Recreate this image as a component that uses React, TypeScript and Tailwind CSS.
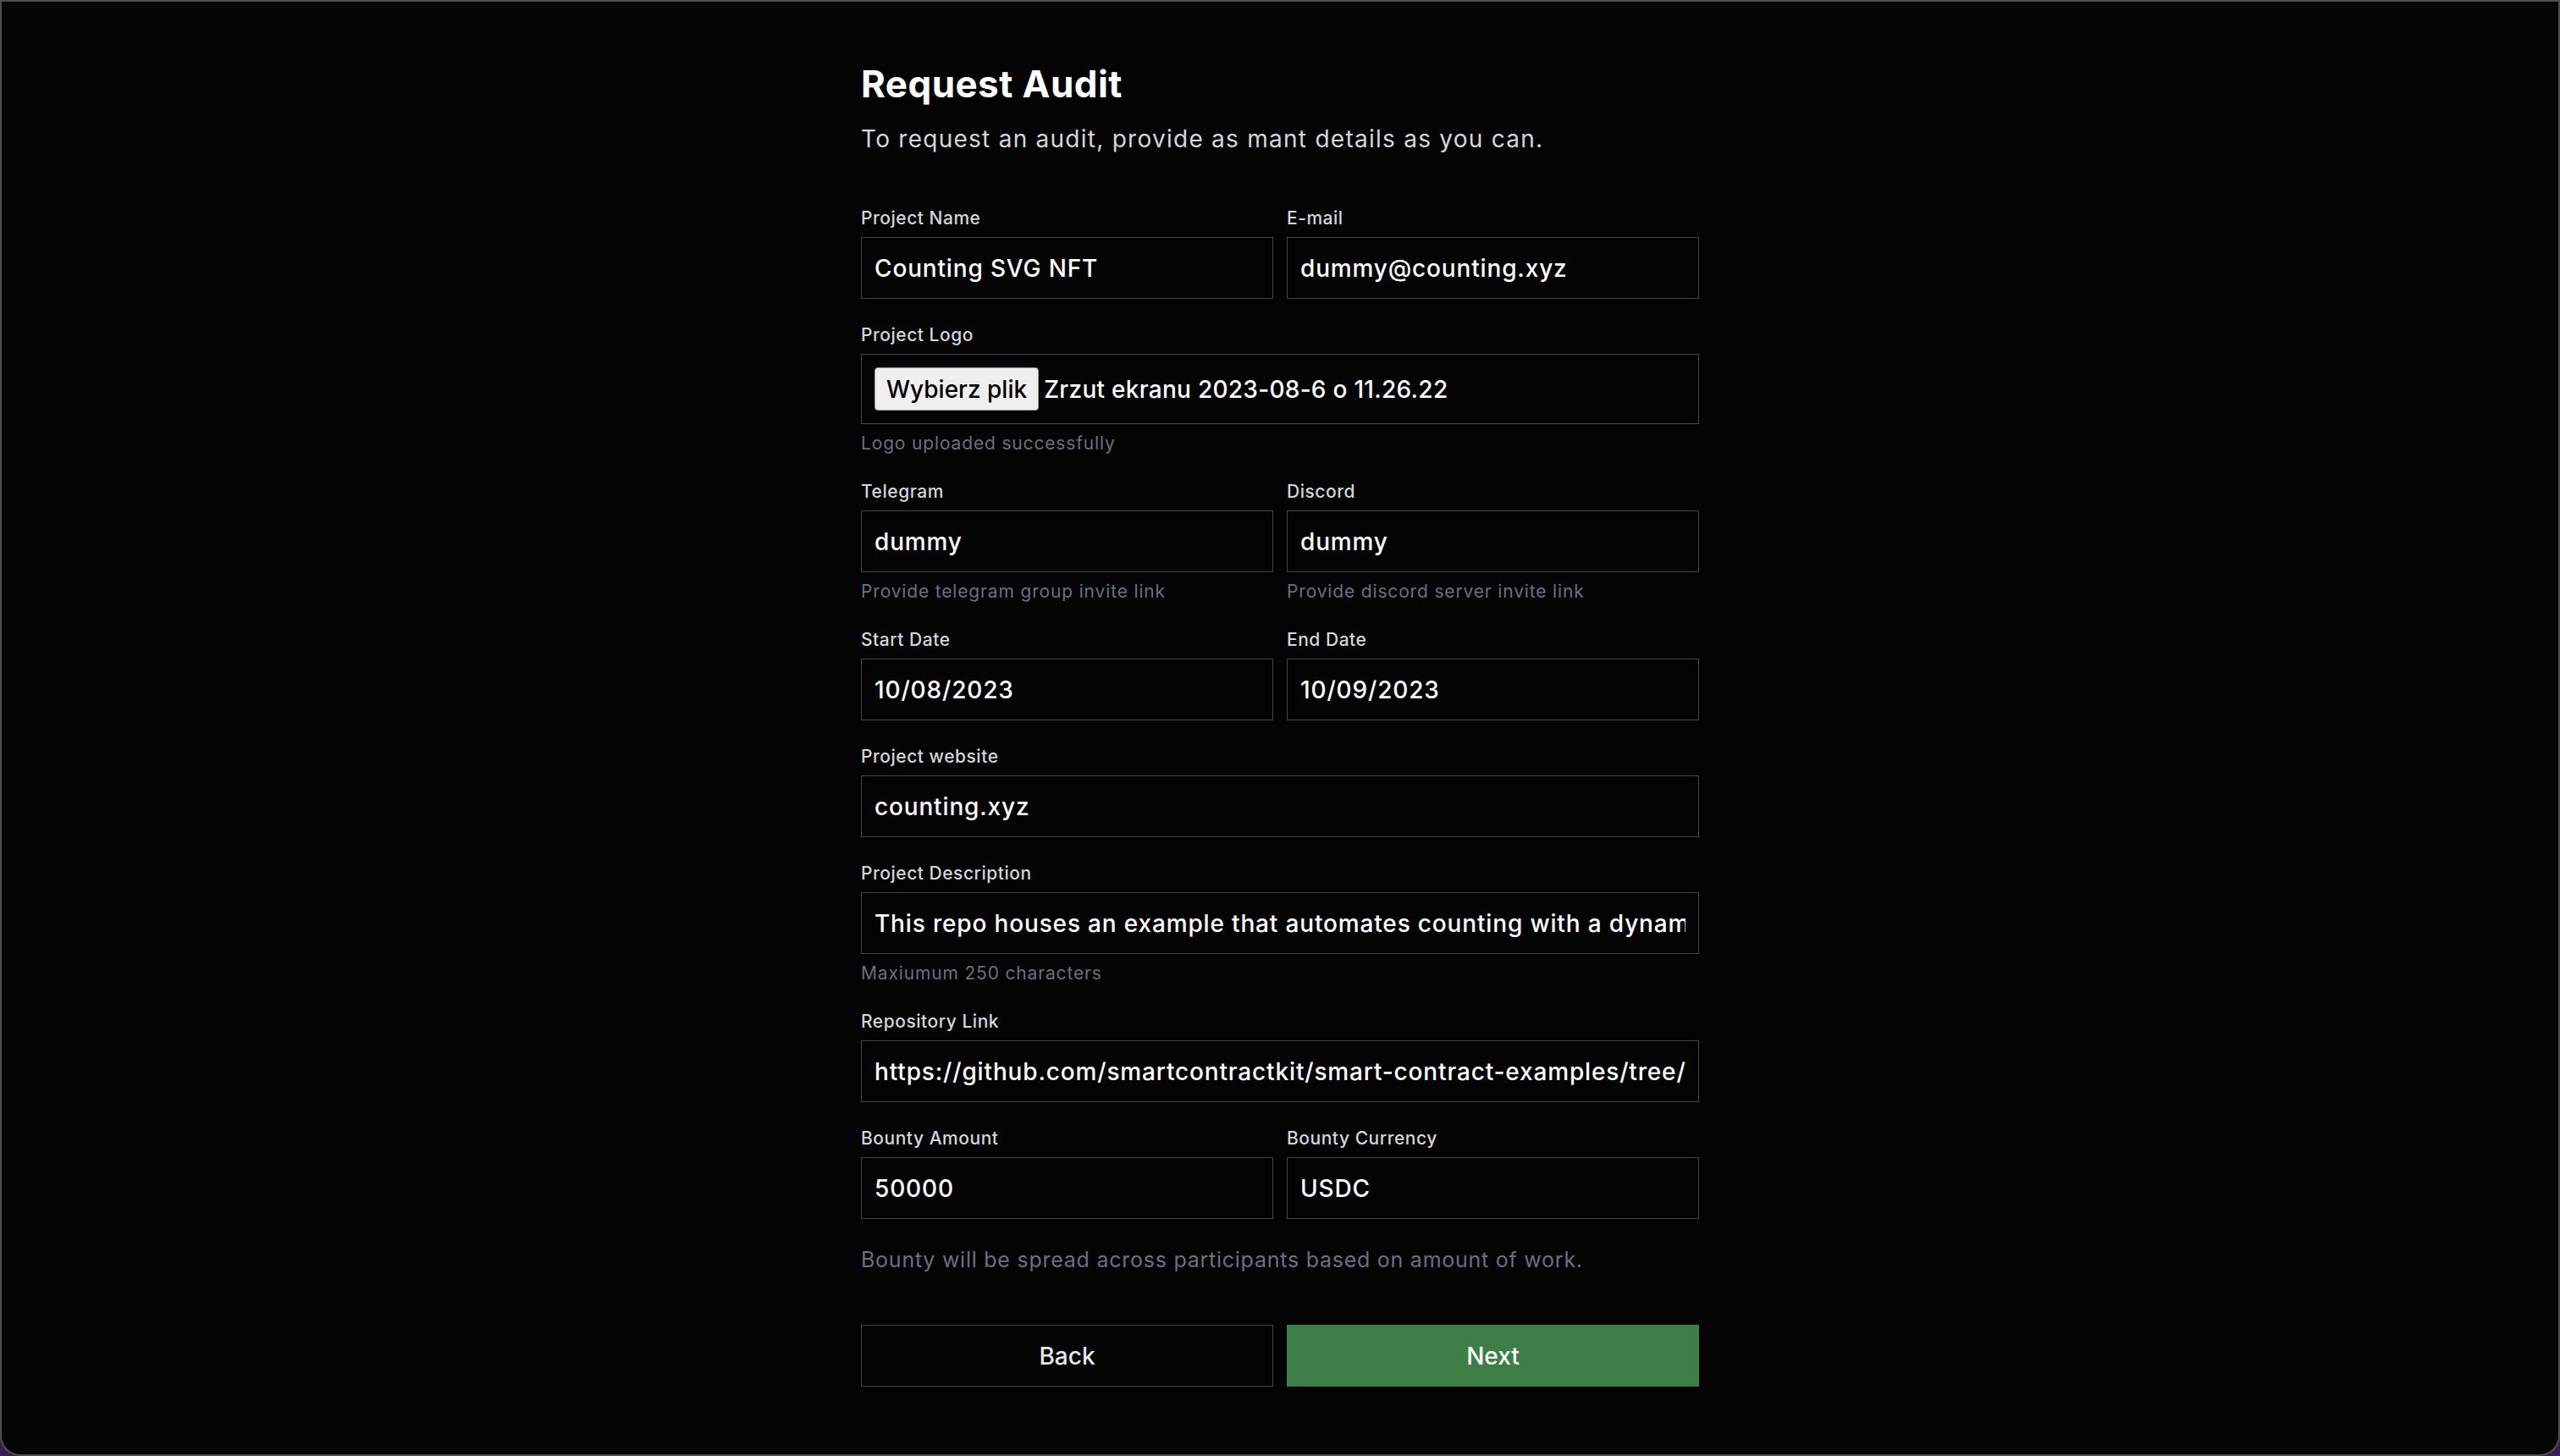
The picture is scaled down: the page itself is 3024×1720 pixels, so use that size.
import React from "react";

type FieldProps = {
  label: string;
  value: string;
  helper?: string;
};

// one labelled input, helper text below when given
function Field({ label, value, helper }: FieldProps) {
  return (
    <div className="flex flex-col min-w-0">
      <label className="text-[21px] leading-[30px] tracking-[0.025em] text-[#d4d6db] font-medium">{label}</label>
      <input
        readOnly
        value={value}
        className="mt-[7px] h-[73px] w-full border border-[#40444f] bg-transparent px-[15px] text-[28px] tracking-[0.03em] font-medium text-white outline-none"
      />
      {helper && <p className="mt-[9px] text-[21px] leading-[28px] tracking-[0.04em] text-[#6b7080]">{helper}</p>}
    </div>
  );
}

export default function App() {
  return (
    <div className="h-[1720px] w-full bg-[#35204f]" style={{ fontFamily: "Inter, 'Noto Sans', sans-serif" }}>
      <div className="h-full rounded-b-[24px] border-2 border-[#4f4f4f] bg-[#040404] flex justify-center">
        <form className="w-[990px] pt-[71px] flex flex-col" onSubmit={(e) => e.preventDefault()}>
          <h1 className="text-[44px] leading-[52px] tracking-[0.01em] font-bold text-white">Request Audit</h1>
          <p className="mt-[21px] text-[28px] leading-[36px] tracking-[0.045em] text-[#d4d6db]">
            To request an audit, provide as mant details as you can.
          </p>

          <div className="mt-[61px] flex flex-col gap-[28px]">
            <div className="grid grid-cols-2 gap-4">
              <Field label="Project Name" value="Counting SVG NFT" />
              <Field label="E-mail" value="dummy@counting.xyz" />
            </div>

            {/* upload */}
            <div className="flex flex-col">
              <label className="text-[21px] leading-[30px] tracking-[0.025em] text-[#d4d6db] font-medium">Project Logo</label>
              <div className="mt-[7px] h-[83px] border border-[#40444f] flex items-center px-[15px] gap-[6px]">
                <span className="h-[51px] px-[13px] flex items-center rounded-[4px] border border-[#9a9a9a] bg-[#efefef] text-[28px] font-medium text-black">
                  Wybierz plik
                </span>
                <span className="text-[28px] tracking-[0.01em] font-medium text-white">Zrzut ekranu 2023-08-6 o 11.26.22</span>
              </div>
              <p className="mt-[9px] text-[21px] leading-[28px] tracking-[0.04em] text-[#6b7080]">Logo uploaded successfully</p>
            </div>

            <div className="grid grid-cols-2 gap-4">
              <Field label="Telegram" value="dummy" helper="Provide telegram group invite link" />
              <Field label="Discord" value="dummy" helper="Provide discord server invite link" />
            </div>

            <div className="grid grid-cols-2 gap-4">
              <Field label="Start Date" value="10/08/2023" />
              <Field label="End Date" value="10/09/2023" />
            </div>

            <Field label="Project website" value="counting.xyz" />

            <Field
              label="Project Description"
              value="This repo houses an example that automates counting with a dynamic SVG NFT"
              helper="Maxiumum 250 characters"
            />

            <Field
              label="Repository Link"
              value="https://github.com/smartcontractkit/smart-contract-examples/tree/main/counting-svg"
            />

            <div className="grid grid-cols-2 gap-4">
              <Field label="Bounty Amount" value="50000" />
              <Field label="Bounty Currency" value="USDC" />
            </div>
          </div>

          <p className="mt-[31px] text-[25px] leading-[34px] tracking-[0.03em] text-[#6b7080]">
            Bounty will be spread across participants based on amount of work.
          </p>

          <div className="mt-[60px] grid grid-cols-2 gap-4">
            <button type="button" className="h-[73px] border border-[#40444f] text-[28px] font-medium text-[#e5e7eb]">
              Back
            </button>
            <button type="submit" className="h-[73px] bg-[#3d7e46] text-[28px] font-medium text-white">
              Next
            </button>
          </div>
        </form>
      </div>
    </div>
  );
}
